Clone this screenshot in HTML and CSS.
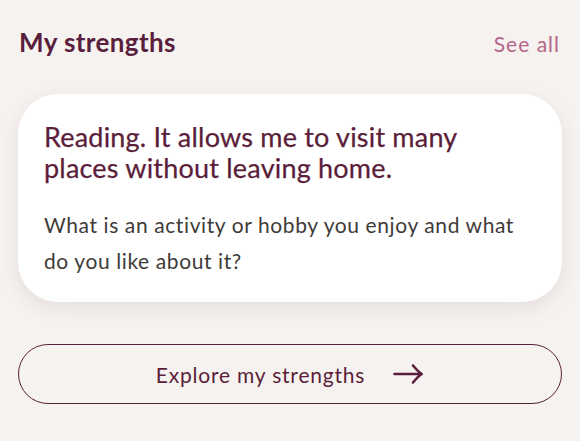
FILE: index.html
```html
<!DOCTYPE html>
<html lang="en">
<head>
<meta charset="utf-8">
<link rel="stylesheet" href="styles.css">
</head>
<body>
<main class="page">
  <header class="section-head">
    <h2 class="section-title">My strengths</h2>
    <a class="see-all" href="#">See all</a>
  </header>
  <article class="card">
    <p class="card-answer">Reading. It allows me to visit many places without leaving home.</p>
    <p class="card-question">What is an activity or hobby you enjoy and what do you like about it?</p>
  </article>
  <button class="explore" type="button">
    <span>Explore my strengths</span>
    <svg class="arrow" width="31" height="22" viewBox="0 0 31 22" fill="none" stroke="currentColor" stroke-width="2.6" stroke-linecap="round" stroke-linejoin="round"><path d="M1.5 11H28.5"/><path d="M20 2.5C23 6 25.5 9 28.5 11C25.5 13 23 16 20 19.5"/></svg>
  </button>
</main>
</body>
</html>
```
FILE: styles.css
```css
* { box-sizing: border-box; }
html, body { margin: 0; padding: 0; }
body {
  background: #f6f2f0;
  font-family: "Lato", "Noto Sans", sans-serif;
  width: 580px;
  height: 441px;
  overflow: hidden;
}
.page {
  padding: 25px 18px 0 18px;
  display: flex;
  flex-direction: column;
}
.section-head {
  display: flex;
  justify-content: space-between;
  align-items: baseline;
  padding: 0 2px 0 1px;
  height: 34px;
}
.section-title {
  margin: 0;
  font-size: 26px;
  line-height: 34px;
  font-weight: 700;
  color: #5a1f3c;
  letter-spacing: 0.4px;
}
.see-all {
  font-size: 21px;
  line-height: 34px;
  color: #b4668a;
  text-decoration: none;
  letter-spacing: 1px;
}
.card {
  margin-top: 35px;
  background: #ffffff;
  border-radius: 40px;
  padding: 27px 26px 0 26px;
  box-shadow: 0 6px 18px rgba(80, 60, 50, 0.10);
  height: 208px;
}
.card-answer {
  margin: 0;
  max-width: 480px;
  font-size: 27px;
  line-height: 31px;
  letter-spacing: 0.2px;
  color: #5a1e3a;
  -webkit-text-stroke: 0.25px #5a1e3a;
}
.card-question {
  margin: 24px 0 0 0;
  max-width: 484px;
  font-size: 21px;
  line-height: 35.5px;
  letter-spacing: 0.6px;
  color: #3e3b38;
}
.explore {
  margin-top: 42px;
  height: 60px;
  border: 1.3px solid #5a1f3c;
  border-radius: 30px;
  background: transparent;
  color: #5a1e3a;
  font-family: inherit;
  font-size: 21px;
  letter-spacing: 0.8px;
  display: flex;
  align-items: center;
  justify-content: center;
  gap: 28px;
  padding: 0 0 0 0;
}
.arrow { display: block; }
```
